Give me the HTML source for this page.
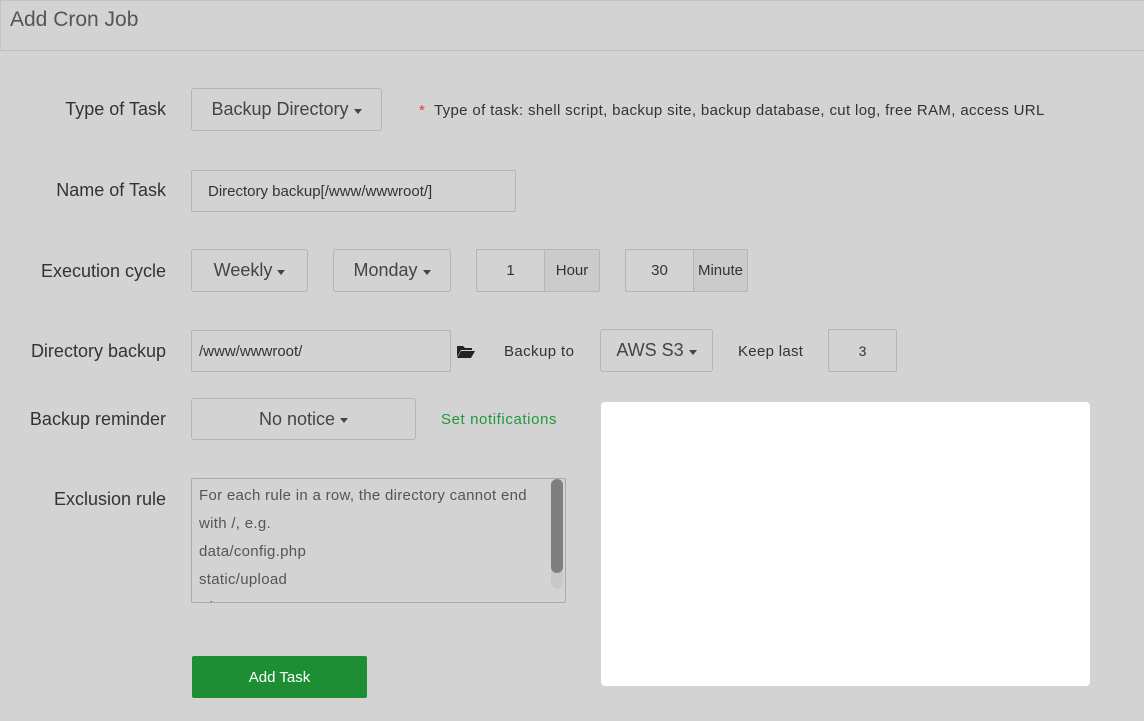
<!DOCTYPE html>
<html><head><style>
body{margin:0;width:1144px;height:721px;background:#d3d3d3;font-family:"Liberation Sans",sans-serif;color:#333;position:relative;overflow:hidden}
.a{position:absolute;box-sizing:border-box}
.hd{left:0;top:0;width:1144px;height:51px;border-bottom:1px solid #bdbdbd;border-left:1px solid #c4c4c4;border-top:1px solid #c4c4c4}
.t{left:10px;top:8px;font-size:21px;color:#555}
.lb{font-size:18px;color:#333;text-align:right;width:166px;left:0}
.b{border:1px solid #b5b5b5;border-radius:3px;font-size:18px;color:#444;display:flex;align-items:center;justify-content:center}
.c{display:inline-block;border-top:5px solid #444;border-left:4px solid transparent;border-right:4px solid transparent;margin-left:5px;margin-top:3px}
.i{border:1px solid #b5b5b5;border-radius:2px;font-size:15px;color:#333;display:flex;align-items:center}
.s{font-size:15px;color:#333}
</style></head><body>
<div class="a hd"></div>
<div class="a t">Add Cron Job</div>

<div class="a lb" style="top:99px">Type of Task</div>
<div class="a b" style="left:191px;top:88px;width:191px;height:43px">Backup Directory<span class="c"></span></div>
<div class="a s" style="left:419px;top:102px;letter-spacing:0.35px"><span style="color:#e33">*</span>&nbsp; Type of task: shell script, backup site, backup database, cut log, free RAM, access URL</div>

<div class="a lb" style="top:180px">Name of Task</div>
<div class="a i" style="left:191px;top:170px;width:325px;height:42px;padding-left:16px">Directory backup[/www/wwwroot/]</div>

<div class="a lb" style="top:261px">Execution cycle</div>
<div class="a b" style="left:191px;top:249px;width:117px;height:43px">Weekly<span class="c"></span></div>
<div class="a b" style="left:333px;top:249px;width:118px;height:43px">Monday<span class="c"></span></div>
<div class="a i" style="left:476px;top:249px;width:124px;height:43px"><span style="width:67px;text-align:center">1</span><span style="border-left:1px solid #b5b5b5;height:100%;flex:1;display:flex;align-items:center;justify-content:center;background:#cbcbcb">Hour</span></div>
<div class="a i" style="left:625px;top:249px;width:123px;height:43px"><span style="width:67px;text-align:center">30</span><span style="border-left:1px solid #b5b5b5;height:100%;flex:1;display:flex;align-items:center;justify-content:center;background:#cbcbcb">Minute</span></div>

<div class="a lb" style="top:341px">Directory backup</div>
<div class="a i" style="left:191px;top:330px;width:260px;height:42px;padding-left:7px">/www/wwwroot/</div>
<svg class="a" style="left:456px;top:344px" width="20" height="15" viewBox="0 0 20 15"><path d="M1 2h6l2 2h7v2H5L1 13z" fill="#222"/><path d="M5 7h14l-4 7H1z" fill="#222"/></svg>
<div class="a s" style="left:504px;top:343px;letter-spacing:0.4px">Backup to</div>
<div class="a b" style="left:600px;top:329px;width:113px;height:43px">AWS S3<span class="c"></span></div>
<div class="a s" style="left:738px;top:343px;letter-spacing:0.3px">Keep last</div>
<div class="a i" style="left:828px;top:329px;width:69px;height:43px;justify-content:center;font-size:14px">3</div>

<div class="a lb" style="top:409px">Backup reminder</div>
<div class="a b" style="left:191px;top:398px;width:225px;height:42px">No notice<span class="c"></span></div>
<div class="a s" style="left:441px;top:411px;color:#20993a;letter-spacing:0.6px">Set notifications</div>

<div class="a lb" style="top:489px">Exclusion rule</div>
<div class="a" style="left:191px;top:478px;width:375px;height:125px;border:1px solid #aaa;border-radius:2px;overflow:hidden">
<div style="padding:3px 7px;font-size:15px;line-height:28px;color:#555;letter-spacing:0.3px">For each rule in a row, the directory cannot end<br>with /, e.g.<br>data/config.php<br>static/upload<br>*.log</div>
<div class="a" style="right:2px;top:0;width:12px;height:110px;background:#c8c8c8;border-radius:6px"><div style="height:94px;background:#7f7f7f;border-radius:6px"></div></div>
</div>

<div class="a" style="left:601px;top:402px;width:489px;height:284px;background:#fff;border-radius:4px"></div>
<div class="a" style="left:192px;top:656px;width:175px;height:42px;background:#1e8e34;border-radius:2px;color:#fff;font-size:15px;display:flex;align-items:center;justify-content:center">Add Task</div>
</body></html>
